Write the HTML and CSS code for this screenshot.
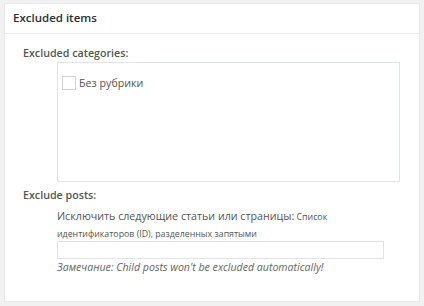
FILE: index.html
```html
<!DOCTYPE html>
<html>
<head>
<meta charset="utf-8">
<link rel="stylesheet" href="styles.css">
</head>
<body>
<div class="panel">
  <h2 class="panel-title">Excluded items</h2>
  <div class="panel-body">
    <div class="field-label">Excluded categories:</div>
    <div class="cat-box">
      <label class="cat-item"><span class="checkbox"></span>Без рубрики</label>
    </div>
    <div class="field-label posts-label">Exclude posts:</div>
    <div class="posts">
      <div class="posts-desc"><span class="big">Исключить следующие статьи или страницы:</span> Список<br>идентификаторов (ID), разделенных запятыми</div>
      <div class="text-input"></div>
      <div class="note">Замечание: Child posts won't be excluded automatically!</div>
    </div>
  </div>
</div>
</body>
</html>
```
FILE: styles.css
```css
html, body {
  margin: 0;
  padding: 0;
  background: #f1f1f1;
  font-family: "Open Sans", "Noto Sans", sans-serif;
}
body {
  padding: 3px 4px 4px 4px;
}
.panel {
  width: 414px;
  height: 297px;
  background: #fff;
  border: 1px solid #e8e8e8;
}
.panel-title {
  margin: 0;
  height: 29px;
  border-bottom: 1px solid #eeeeee;
  font-size: 11.5px;
  font-weight: 600;
  color: #2a2f34;
  padding-left: 8px;
  line-height: 27px;
}
.panel-body {
  padding: 12px 0 0 18px;
}
.field-label {
  font-size: 10.7px;
  font-weight: 600;
  color: #555;
  line-height: 15px;
}
.cat-box {
  margin: 1px 0 0 34px;
  width: 341px;
  height: 118px;
  border: 1px solid #dfe3ea;
}
.cat-item {
  display: flex;
  align-items: center;
  margin: 13px 0 0 4px;
  font-size: 10.7px;
  color: #555;
  line-height: 14px;
}
.checkbox {
  width: 12px;
  height: 12px;
  border: 1px solid #d2d2d2;
  margin-right: 3px;
}
.posts-label {
  margin-top: 6px;
}
.posts {
  margin: 5px 0 0 34px;
}
.posts-desc {
  font-size: 8.8px;
  color: #555;
  line-height: 17px;
}
.posts-desc .big {
  font-size: 10.7px;
}
.text-input {
  margin-top: -2px;
  width: 325px;
  height: 16px;
  border: 1px solid #e3e3e3;
}
.note {
  font-size: 10.6px;
  font-style: italic;
  color: #666;
  line-height: 14px;
  margin-top: 1px;
}
```
